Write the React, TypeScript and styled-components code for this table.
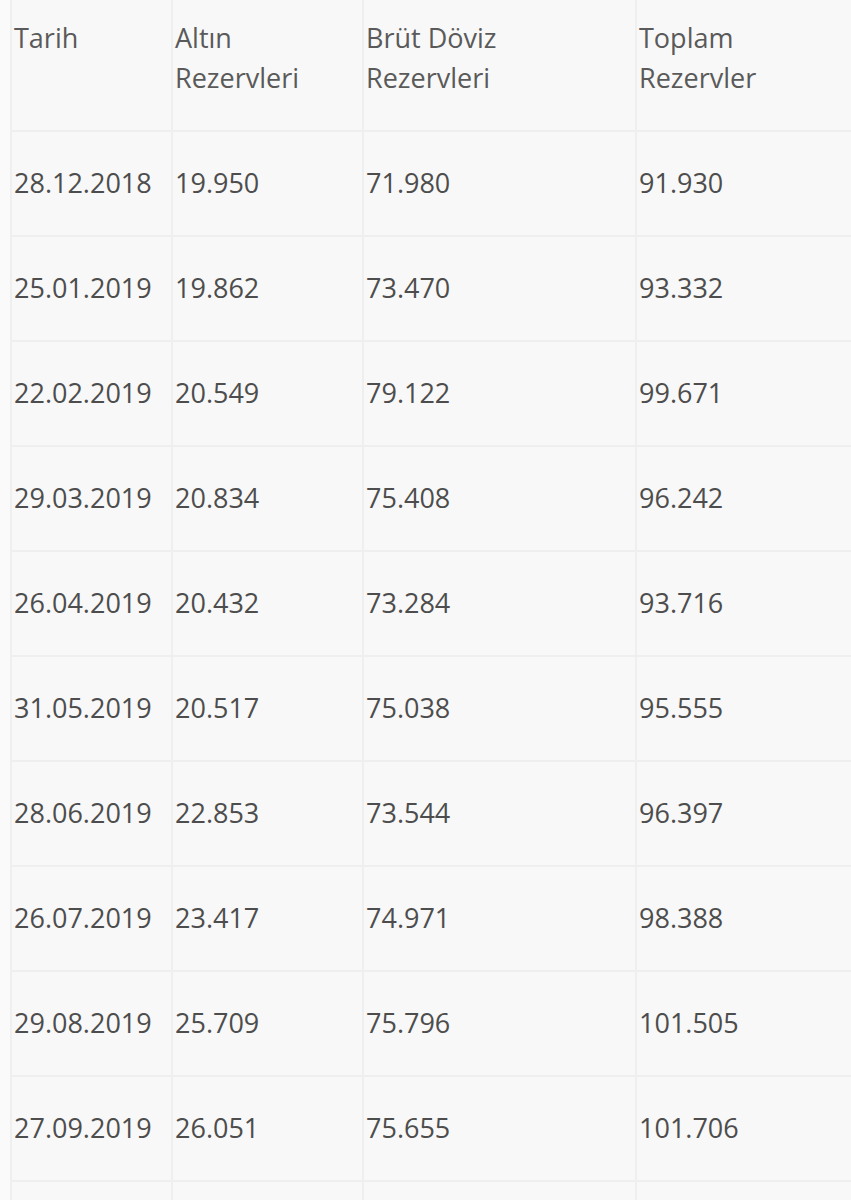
import styled, { createGlobalStyle } from "styled-components";

const GlobalStyle = createGlobalStyle`
  html, body {
    margin: 0;
    padding: 0;
    background: #fafafa;
    overflow: hidden;
  }
  body {
    font-family: "Open Sans", "Noto Sans", "DejaVu Sans", sans-serif;
  }
`;

const rows: { date: string; gold: string; fx: string; total: string }[] = [
  { date: "28.12.2018", gold: "19.950", fx: "71.980", total: "91.930" },
  { date: "25.01.2019", gold: "19.862", fx: "73.470", total: "93.332" },
  { date: "22.02.2019", gold: "20.549", fx: "79.122", total: "99.671" },
  { date: "29.03.2019", gold: "20.834", fx: "75.408", total: "96.242" },
  { date: "26.04.2019", gold: "20.432", fx: "73.284", total: "93.716" },
  { date: "31.05.2019", gold: "20.517", fx: "75.038", total: "95.555" },
  { date: "28.06.2019", gold: "22.853", fx: "73.544", total: "96.397" },
  { date: "26.07.2019", gold: "23.417", fx: "74.971", total: "98.388" },
  { date: "29.08.2019", gold: "25.709", fx: "75.796", total: "101.505" },
  { date: "27.09.2019", gold: "26.051", fx: "75.655", total: "101.706" },
];

export default function App() {
  return (
    <>
      <GlobalStyle />
      <Page>
        <Table>
          <colgroup>
            <col style={{ width: 161 }} />
            <col style={{ width: 191 }} />
            <col style={{ width: 273 }} />
            <col style={{ width: 273 }} />
          </colgroup>
          <thead>
            <tr>
              <Th>Tarih</Th>
              <Th>
                Altın
                <br />
                Rezervleri
              </Th>
              <Th>
                Brüt Döviz
                <br />
                Rezervleri
              </Th>
              <Th>
                Toplam
                <br />
                Rezervler
              </Th>
            </tr>
          </thead>
          <tbody>
            {rows.map((row) => (
              <tr key={row.date}>
                <Td>{row.date}</Td>
                <Td>{row.gold}</Td>
                <Td>{row.fx}</Td>
                <Td>{row.total}</Td>
              </tr>
            ))}
            <tr>
              <Td>&nbsp;</Td>
              <Td>&nbsp;</Td>
              <Td>&nbsp;</Td>
              <Td>&nbsp;</Td>
            </tr>
          </tbody>
        </Table>
      </Page>
    </>
  );
}

const Page = styled.div`
  width: 851px;
  height: 1200px;
  overflow: hidden;
  background: #fafafa;
`;

const Table = styled.table`
  margin-left: 10px;
  width: 898px;
  table-layout: fixed;
  border-collapse: separate;
  border-spacing: 0;
  background: #f8f8f8;
`;

const Th = styled.th`
  text-align: left;
  vertical-align: top;
  font-weight: 400;
  font-size: 27px;
  line-height: 40px;
  color: #5a5a5a;
  padding: 18px 2px 32px;
  border-left: 2px solid #efefef;
  border-bottom: 2px solid #efefef;
`;

const Td = styled.td`
  text-align: left;
  vertical-align: top;
  font-size: 27px;
  line-height: 40px;
  color: #4d4d4d;
  padding: 31px 2px 32px;
  border-left: 2px solid #efefef;
  border-bottom: 2px solid #efefef;
  white-space: nowrap;
`;
